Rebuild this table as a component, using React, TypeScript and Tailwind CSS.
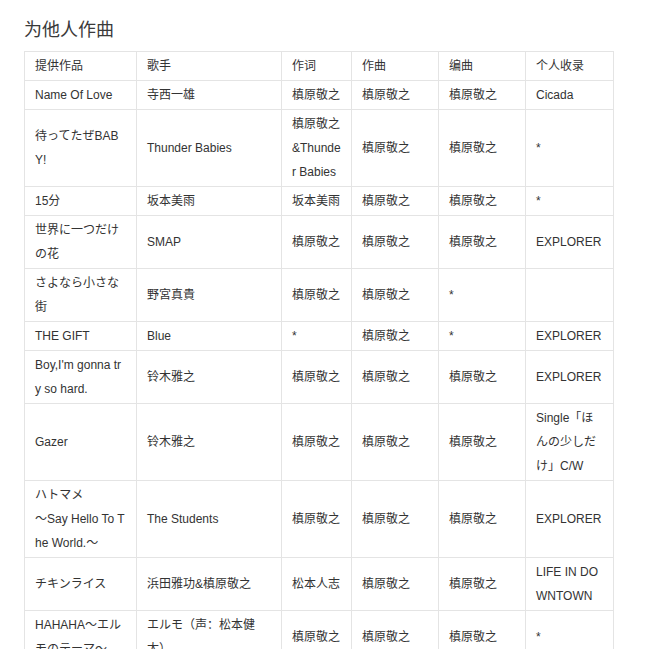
import React from "react";

const rows: React.ReactNode[][] = [
	["Name Of Love", "寺西一雄", "槙原敬之", "槙原敬之", "槙原敬之", "Cicada"],
	["待ってたぜBABY!", "Thunder Babies", "槙原敬之&Thunder Babies", "槙原敬之", "槙原敬之", "*"],
	["15分", "坂本美雨", "坂本美雨", "槙原敬之", "槙原敬之", "*"],
	["世界に一つだけの花", "SMAP", "槙原敬之", "槙原敬之", "槙原敬之", "EXPLORER"],
	["さよなら小さな街", "野宮真貴", "槙原敬之", "槙原敬之", "*", ""],
	["THE GIFT", "Blue", "*", "槙原敬之", "*", "EXPLORER"],
	["Boy,I'm gonna try so hard.", "铃木雅之", "槙原敬之", "槙原敬之", "槙原敬之", "EXPLORER"],
	["Gazer", "铃木雅之", "槙原敬之", "槙原敬之", "槙原敬之", "Single「ほんの少しだけ」C/W"],
	[
		<>
			ハトマメ
			<br />
			～Say Hello To The World.～
		</>,
		"The Students",
		"槙原敬之",
		"槙原敬之",
		"槙原敬之",
		"EXPLORER",
	],
	["チキンライス", "浜田雅功&槙原敬之", "松本人志", "槙原敬之", "槙原敬之", "LIFE IN DOWNTOWN"],
	["HAHAHA～エルモのテーマ～", "エルモ（声：松本健太）", "槙原敬之", "槙原敬之", "槙原敬之", "*"],
];

const head = ["提供作品", "歌手", "作词", "作曲", "编曲", "个人收录"];

const cell = "border border-[#e4e4e4] px-[10px] py-[2px] align-middle break-all leading-[24px]";

export default function App() {
	return (
		<div className="min-h-screen bg-white px-[24px] pt-[16px] text-[#333] font-['Liberation_Sans','Noto_Sans_CJK_SC',sans-serif]">
			<h2 className="text-[18px] leading-[28px] text-[#3a3a3a] mb-[7px]">为他人作曲</h2>
			<table className="table-fixed border-collapse w-[589px] text-[12px]">
				<colgroup>
					<col className="w-[112px]" />
					<col className="w-[145px]" />
					<col className="w-[70px]" />
					<col className="w-[87px]" />
					<col className="w-[87px]" />
					<col className="w-[88px]" />
				</colgroup>
				<thead>
					<tr>
						{head.map((h) => (
							<th key={h} className={cell + " text-left font-normal"}>
								{h}
							</th>
						))}
					</tr>
				</thead>
				<tbody>
					{rows.map((r, i) => (
						<tr key={i}>
							{r.map((c, j) => (
								<td key={j} className={cell}>
									{c}
								</td>
							))}
						</tr>
					))}
				</tbody>
			</table>
		</div>
	);
}
